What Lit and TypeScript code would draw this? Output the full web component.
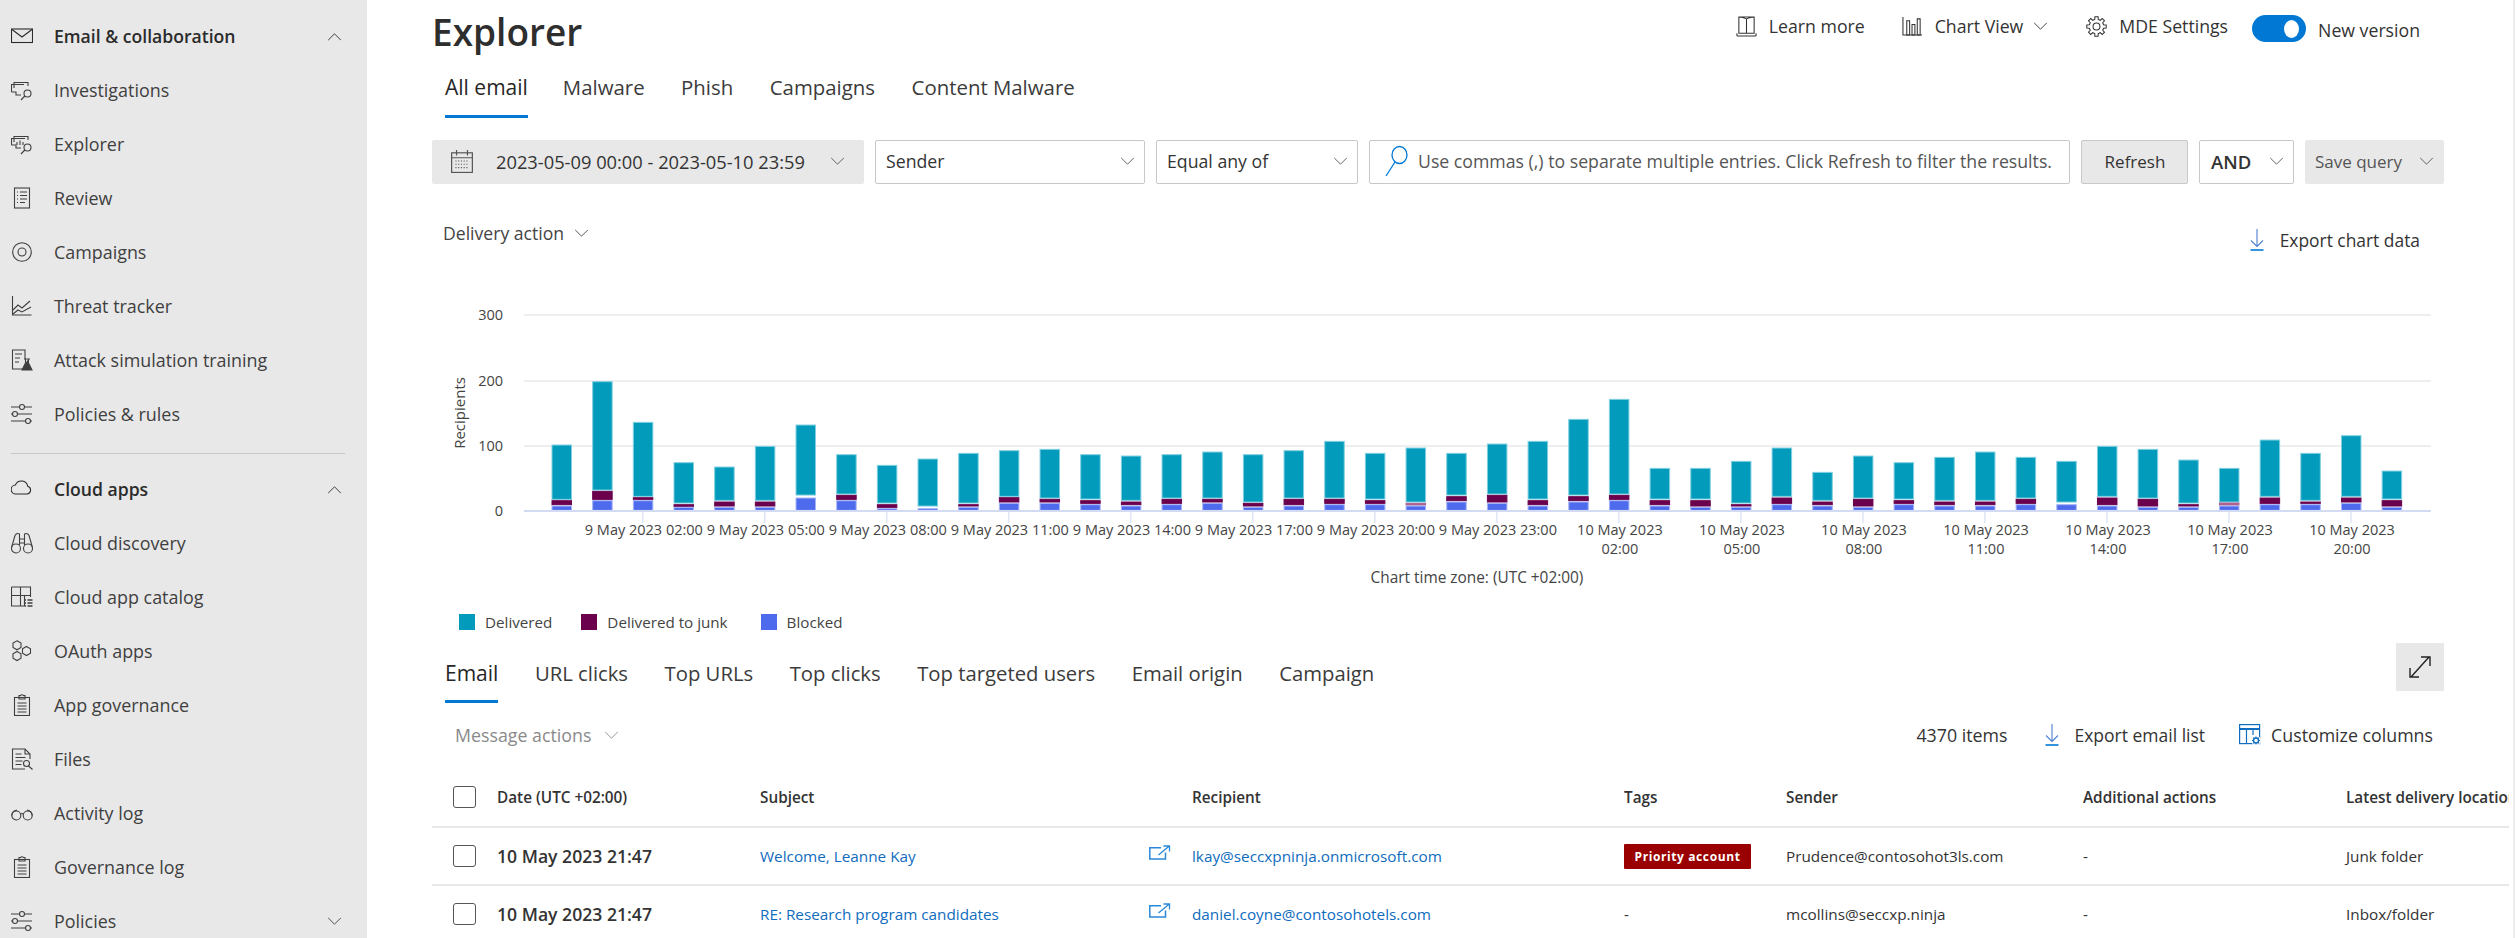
import { LitElement, html, css, svg } from "lit";
import { customElement } from "lit/decorators.js";

const s = (c: unknown, vb = "0 0 22 22", cls = "") => html`<svg class="ic ${cls}" viewBox=${vb} fill="none" stroke="currentColor" stroke-width="1.1">${c}</svg>`;

const gearPath = (() => {
  const pts: string[] = [];
  const n = 8;
  for (let i = 0; i < n; i++) {
    const a = (i / n) * Math.PI * 2;
    const st = Math.PI / n;
    const p = (r: number, t: number) => `${(11 + r * Math.cos(t)).toFixed(2)} ${(11 + r * Math.sin(t)).toFixed(2)}`;
    pts.push(`${i ? "L" : "M"}${p(10.3, a - st * 0.42)}`, `L${p(10.3, a + st * 0.42)}`, `L${p(7.6, a + st * 0.62)}`, `L${p(7.6, a + st * 1.38)}`);
  }
  return pts.join("") + "Z";
})();

const I: Record<string, unknown> = {
  mail: svg`<rect x="0.5" y="4" width="21" height="13.5"/><path d="M1 4.5l10 7.5 10-7.5"/>`,
  inv: svg`<path d="M3 9V3.5h14V7"/><path d="M0.5 13V5.5H13M0.5 13H5v3h5"/><circle cx="16.5" cy="14.5" r="3.5"/><path d="M13.8 17L10 21"/>`,
  exp: svg`<path d="M3 9V3.5h14V7"/><path d="M0.5 12V5.5H14M0.5 12H5v3h5"/><circle cx="16.5" cy="14.5" r="3.5"/><path d="M13.8 17L10 21M6 12V9M9 12V7.5M12 12V9"/>`,
  rev: svg`<rect x="3.5" y="1" width="15" height="20"/><path d="M6 5h1M6 8.5h1M6 12h1M6 15.5h1M9 5h7M9 8.5h7M9 12h7M9 15.5h5"/>`,
  cam: svg`<circle cx="11" cy="11" r="9.3"/><circle cx="11" cy="11" r="4"/>`,
  thr: svg`<path d="M1.5 1v19h19"/><path d="M2 15l5-5 4 3 8-7M2 19l5-4 4 2 9-5"/>`,
  atk: svg`<path d="M11 20H1.5V1H14v9"/><path d="M4 5h7M4 9h5M4 13h4M13 10h6M14.5 10v4"/><path d="M17.5 10v4l3.5 7h-10l3.5-7" fill="currentColor"/>`,
  pol: svg`<path d="M0 4h21M0 11h21M0 18h21"/><circle cx="11" cy="4" r="2.5" fill="#e8e8e8"/><circle cx="4" cy="11" r="2.5" fill="#e8e8e8"/><circle cx="17" cy="18" r="2.5" fill="#e8e8e8"/>`,
  cloud: svg`<path d="M5.5 18a4.5 4.5 0 0 1-.6-9 6.5 6.5 0 0 1 12.4 1.3A4 4 0 0 1 17 18z" transform="translate(-0.5 -2)"/>`,
  bin: svg`<circle cx="5" cy="16.5" r="4.5"/><circle cx="17" cy="16.5" r="4.5"/><path d="M0.7 15L4 3.5q1.5-3 4.5-1.5V13M21.3 15L18 3.5q-1.5-3-4.5-1.5V13M8.500 7h5M8.500 11h5"/>`,
  cat: svg`<path d="M0.500 1h19v10M0.500 1v19h13V9M0.500 9.500H19.500M9.500 1v19"/><path d="M14 14h1M14 17h1M14 20h1M16.500 14h5M16.500 17h5M16.500 20h5" stroke-width="1.3"/>`,
  oau: svg`<path d="M6 0.800l4 2.300v4.400l-4 2.300-4-2.300V3.100zM6 11.500l4 2.300v4.400l-4 2.300-4-2.300v-4.400zM15.500 6.500l4 2.300v4.400l-4 2.300-4-2.300V8.800z"/>`,
  clip: svg`<rect x="3.500" y="3.500" width="15" height="18"/><path d="M8 3.500V1.500h1.500q1.500-1.500 3 0H14v3.500H8zM6.500 9h9M6.500 12h9M6.500 15h9M6.500 18h9"/>`,
  file: svg`<path d="M14 21H1.500V1H14l5 5v5"/><path d="M14 1v5h5M4.500 6h6M4.500 9.500h10M4.500 13h7M4.500 16.500h6"/><circle cx="15.500" cy="15.500" r="3"/><path d="M17.500 18l4 3.500"/>`,
  glass: svg`<circle cx="5.300" cy="13.500" r="4.500"/><circle cx="16.700" cy="13.500" r="4.500"/><path d="M9.500 12q1.500-1 3 0M0.800 13.500Q1 9 6 8M21.200 13.500Q21 9 16 8"/>`,
  cal: svg`<rect x="1.500" y="3.500" width="19" height="18"/><path d="M1.500 8h19M6 1v5M16 1v5"/><path d="M5 11h12M5 14h12M5 17h12" stroke-dasharray="1 1.500"/>`,
  book: svg`<path d="M3 1h16v17H3zM11 3v15M3 1q4 0 8 2q4-2 8-2M1 21h20M1 18v3M21 18v3"/>`,
  chart: svg`<path d="M1 1v19h20"/><path d="M5 5h3v15H5zM10.500 9h3v11h-3zM16 3h3v17h-3z"/>`,
  gear: svg`<path d=${gearPath}/><circle cx="11" cy="11" r="3.600"/>`,
  dl: svg`<path d="M7 0v17.500M1 11.500l6 6 6-6" stroke="#4f7fd0"/><path d="M0.500 21h13" stroke="#0078d4" stroke-width="1.600"/>`,
  cust: svg`<rect x="0.600" y="0.600" width="20" height="19" stroke-width="1.200"/><path d="M1 5h20" stroke-width="2"/><path d="M7.500 6v14M14 6v5" stroke-width="1.200"/><circle cx="17" cy="16.500" r="4.800" fill="#fff" stroke="none"/><circle cx="17" cy="16.500" r="2.500" stroke-width="1.400"/><path d="M17 12.500v1.500M17 19v1.500M13 16.500h1.500M19.500 16.500H21M14.200 13.700l1 1M18.800 18.300l1 1M19.800 13.700l-1 1M15.200 18.300l-1 1" stroke-width="1.100"/>`,
  open: svg`<path d="M12 2.700H0.800V14H16.500V7.500" stroke-width="1.500"/><path d="M9.500 10L20 1.200M14.500 1H20.500V6.500" stroke-width="1.300"/>`,
};
const chev = (up = false) => html`<svg class="chev" viewBox="0 0 16 10" fill="none" stroke="currentColor" stroke-width="1"><path d=${up ? "M1 9l7-7 7 7" : "M1 1l7 7 7-7"}/></svg>`;

const nav1 = [["inv", "Investigations"], ["exp", "Explorer"], ["rev", "Review"], ["cam", "Campaigns"], ["thr", "Threat tracker"], ["atk", "Attack simulation training"], ["pol", "Policies & rules"]];
const nav2 = [["bin", "Cloud discovery"], ["cat", "Cloud app catalog"], ["oau", "OAuth apps"], ["clip", "App governance"], ["file", "Files"], ["glass", "Activity log"], ["clip", "Governance log"]];

// [teal top, teal bottom, junk top, junk bottom, blue top] zoomed px, baseline 662, 3 per real px
const bars: number[][] = [
  [465,628,632,644,648],[275,600,604,628,632],[397,619,623,628,632],[518,639,644,649,652],[531,631,636,648,652],[469,631,636,648,652],
  [405,615,0,0,624],[494,612,616,628,632],[526,639,644,652,656],[507,648,0,0,656],[490,639,644,648,652],[482,619,623,636,640],
  [478,624,628,636,640],[494,627,632,640,644],[498,631,636,644,648],[494,624,628,640,644],[486,624,628,636,640],[494,636,640,648,652],
  [482,624,628,644,648],[454,624,628,640,644],[490,627,632,640,644],[474,636,640,645,648],[490,615,620,632,636],[462,612,616,636,640],
  [454,627,632,644,648],[388,615,620,632,636],[328,612,616,628,632],[535,627,632,644,648],[535,627,632,648,652],[514,639,644,648,652],
  [474,619,624,640,644],[547,631,636,644,648],[498,624,628,648,652],[518,627,632,640,644],[502,631,636,644,648],[486,631,636,644,648],
  [502,624,628,640,644],[514,636,0,0,644],[469,619,624,644,648],[478,624,628,648,652],[510,639,644,648,652],[535,636,639,645,648],
  [450,619,624,640,644],[490,631,636,640,644],[437,619,624,636,640],[543,627,632,648,652],
];
const Y0 = 210.7, X0 = 122; // svg origin: page x 430, y 300
const y = (z: number) => (z - 662) / 3 + Y0;
const ticks = ["9 May 2023 02:00","9 May 2023 05:00","9 May 2023 08:00","9 May 2023 11:00","9 May 2023 14:00","9 May 2023 17:00","9 May 2023 20:00","9 May 2023 23:00",["10 May 2023","02:00"],["10 May 2023","05:00"],["10 May 2023","08:00"],["10 May 2023","11:00"],["10 May 2023","14:00"],["10 May 2023","17:00"],["10 May 2023","20:00"]];

@customElement("app-root")
export class AppRoot extends LitElement {
  static styles = css`
    :host { display: block; width: 2515px; height: 938px; overflow: hidden; background: #fff; font-family: "Open Sans", "Noto Sans", sans-serif; color: #333; }
    * { box-sizing: border-box; }
    .page { display: flex; height: 938px; }
    .ic { width: 22px; height: 22px; flex: none; display: block; }
    .ic.dlic { width: 14px; height: 22px; }
    .chev { width: 15px; height: 9px; flex: none; display: block; }
    .side { width: 367px; flex: none; background: #e8e8e8; padding-top: 9px; color: #3f3f3f; }
    .nav { height: 54px; display: flex; align-items: center; padding-left: 11px; font-size: 17.9px; }
    .nav .ic { margin-right: 21px; }
    .nav.head { font-weight: 600; font-size: 17.6px; color: #2b2b2b; }
    .nav .chev { margin-left: auto; margin-right: 25px; }
    .div { height: 1px; background: #c8c8c8; margin: 12px 22px 8px 11px; }
    .main { flex: 1; min-width: 0; padding-left: 65px; overflow: hidden; border-right: 2px solid #eeeeee; }
    .top { height: 64px; display: flex; justify-content: space-between; }
    h1 { margin: 9px 0 0; font-size: 37px; font-weight: 600; line-height: 46px; color: #2e2e2e; }
    .tr { display: flex; padding: 13px 93px 0 0; font-size: 17.7px; height: 46px; }
    .tr .a { display: flex; align-items: center; gap: 12px; height: 26px; }
    .tr .ic { width: 21px; height: 21px; }
    .tr .chev { margin-left: -2px; }
    .a1 { margin-right: 37px; } .a2 { margin-right: 38px; } .a3 { margin-right: 24px; }
    .toggle { width: 54px; height: 27px; border-radius: 14px; background: #0078d4; display: flex; align-items: center; justify-content: flex-end; padding-right: 7px; margin: 2px 12px 0 0; }
    .toggle i { width: 15px; height: 18px; border-radius: 50%; background: #fff; display: block; }
    .nv { line-height: 34px; }
    .tabs { display: flex; height: 54px; padding-left: 13px; font-size: 20.4px; color: #3b3b3b; }
    .tab { height: 54px; padding-top: 9px; line-height: 28px; border-bottom: 3px solid transparent; white-space: nowrap; }
    .tab.on { border-bottom-color: #0078d4; color: #262626; font-weight: 500; font-size: 21px; }
    .t1 .tab { margin-right: 36.5px; }
    .t1 .tab.on { margin-right: 35px; }
    .filters { display: flex; margin-top: 22px; height: 44px; gap: 11px; font-size: 17.7px; }
    .f { height: 44px; border: 1px solid #c8c8c8; border-radius: 2px; display: flex; align-items: center; padding: 0 9px 2px 10px; }
    .f .chev { margin-left: auto; color: #555; }
    .date { width: 432px; background: #e8e8e8; border: 0; padding: 0 19px 2px 18px; font-size: 18.300px; }
    .date .ic { margin-right: 22px; width: 24px; height: 24px; color: #555; }
    .sender { width: 270px; } .eq { width: 202px; }
    .search { width: 701px; padding-left: 15px; color: #555; white-space: nowrap; }
    .search svg { width: 23px; height: 32px; flex: none; margin-right: 10px; }
    .refresh { width: 107px; background: #e8e8e8; justify-content: center; font-size: 17px; }
    .and { width: 95px; font-weight: 600; padding-left: 11px; font-size: 18.5px; }
    .save { width: 139px; background: #e8e8e8; border: 0; padding: 0 10px 2px 10px; color: #555; font-size: 17px; }
    .bar2 { display: flex; justify-content: space-between; height: 88px; padding: 0 93px 0 11px; }
    .da { display: flex; align-items: center; gap: 10px; height: 26px; margin-top: 36px; font-size: 17.6px; color: #444; }
    .ec { display: flex; align-items: center; gap: 16px; height: 26px; margin-top: 43px; font-size: 17.4px; }
    .chart { display: block; margin-left: -2px; width: 2085px; height: 312px; margin-top: 28px; }
    .chart text { font-family: "Open Sans", sans-serif; fill: #444; font-size: 14.500px; }
    .legend { display: flex; padding-left: 27px; font-size: 15.200px; color: #444; height: 18px; align-items: center; margin-top: 1px; }
    .legend i { width: 16px; height: 16px; margin-right: 10px; display: block; }
    .lg1 { margin-right: 29px; } .lg2 { margin-right: 33px; }
    .t2row { display: flex; justify-content: space-between; padding-right: 69px; height: 84px; }
    .t2 { height: 72px; font-size: 20.300px; }
    .t2 .tab { height: 72px; padding-top: 28px; margin-right: 36.500px; }
    .exp { width: 48px; height: 48px; background: #e8e8e8; display: flex; align-items: center; justify-content: center; margin-top: 12px; }
    .exp svg { width: 26px; height: 26px; color: #222; }
    .acts { display: flex; align-items: center; height: 40px; padding: 0 80px 0 23px; font-size: 17.800px; }
    .ma { color: #8a8a8a; display: flex; gap: 13px; align-items: center; margin-right: auto; }
    .acts .act { display: flex; align-items: center; gap: 14px; }
    .acts .act.c { gap: 10px; }
    .acts .ael { gap: 15px; font-size: 17.500px; }
    .items { margin-right: 38px; } .ael { margin-right: 34px; }
    .acts .ic { color: #106ebe; }
    .tbl { display: grid; grid-template-columns: 65px 263px 432px 432px 162px 297px 263px 163px; width: 2077px; font-size: 15.300px; margin-top: 15px; white-space: nowrap; overflow: hidden; }
    .tbl > div { display: flex; align-items: center; border-bottom: 2px solid #e8e8e8; height: 58px; min-width: 0; }
    .tbl > div.h { font-weight: 600; font-size: 15.300px; color: #333; padding-bottom: 2px; }
    .cb { width: 23px; height: 22px; border: 1px solid #555; border-radius: 3px; margin-left: 21px; flex: none; }
    .tbl > .dt { font-weight: 600; font-size: 17.600px; }
    a { color: #0f6cbd; text-decoration: none; }
    .tbl > .rc { gap: 21px; margin-left: -43px; }
    .rc .ic { color: #2b88d8; }
    .badge { background: #9a0000; color: #fff; font-size: 12px; font-weight: 700; letter-spacing: .6px; height: 25px; width: 127px; display: flex; align-items: center; justify-content: center; border-radius: 1px; }
  `;

  private nav(icon: string, label: string, head = false, c: unknown = null) {
    return html`<div class="nav ${head ? "head" : ""}">${s(I[icon])}<span>${label}</span>${c}</div>`;
  }

  private chart() {
    return html`<svg class="chart" viewBox="0 0 2085 312">
      ${[15, 81, 146].map((v) => svg`<rect x="94" y=${v - 1} width="1907" height="2" fill="#eee"/>`)}
      ${[["300", 15], ["200", 81], ["100", 146], ["0", 211]].map(([t, v]) => svg`<text x="73" y=${(v as number) + 5} text-anchor="end">${t}</text>`)}
      <text transform="translate(35 113) rotate(-90)" text-anchor="middle" style="font-size:15px">Recipients</text>
      ${bars.map((b, i) => {
        const x = X0 + i * 40.67;
        const r = (top: number, bot: number, c: string, st: string) => svg`<rect x=${x} y=${y(top)} width="19.500" height=${Math.max(y(bot) - y(top), 0)} fill=${c} stroke=${st} stroke-width="1"/>`;
        const pale = b[3] - b[2] > 0 && i !== 21 && i !== 41;
        return svg`${r(b[0], b[1], "#029bbc", "#7fcfe0")}${b[2] ? r(b[2], b[3], pale ? "#6b004d" : "#b0608f", pale ? "#6b004d" : "#b0608f") : null}${r(b[4], 661, "#4f6bed", "#a5b4f5")}`;
      })}
      <rect x="94" y="210" width="1907" height="2" fill="#d3dbf2"/>
      ${ticks.map((t, i) => {
        const cx = X0 + (2 + i * 3) * 40.67 + 9.500;
        return svg`<rect x=${cx - 0.500} y="212" width="1" height="11" fill="#cfd8ee"/>
        ${Array.isArray(t)
          ? svg`<text x=${cx + 1} y="235" text-anchor="middle">${t[0]}</text><text x=${cx + 1} y="254" text-anchor="middle">${t[1]}</text>`
          : svg`<text x=${cx + 1} y="235" text-anchor="middle">${t}</text>`}`;
      })}
      <text x="1047" y="283" text-anchor="middle" style="font-size:15.400px">Chart time zone: (UTC +02:00)</text>
    </svg>`;
  }

  render() {
    return html`<div class="page">
      <div class="side">
        ${this.nav("mail", "Email & collaboration", true, chev(true))}
        ${nav1.map(([i, l]) => this.nav(i, l))}
        <div class="div"></div>
        ${this.nav("cloud", "Cloud apps", true, chev(true))}
        ${nav2.map(([i, l]) => this.nav(i, l))}
        ${this.nav("pol", "Policies", false, chev())}
      </div>
      <div class="main">
        <div class="top">
          <h1>Explorer</h1>
          <div class="tr">
            <div class="a a1">${s(I.book)}<span>Learn more</span></div>
            <div class="a a2">${s(I.chart)}<span>Chart View</span>${chev()}</div>
            <div class="a a3">${s(I.gear)}<span>MDE Settings</span></div>
            <div class="toggle"><i></i></div>
            <span class="nv">New version</span>
          </div>
        </div>
        <div class="tabs t1">
          ${["All email", "Malware", "Phish", "Campaigns", "Content Malware"].map((t, i) => html`<div class="tab ${i === 0 ? "on" : ""}">${t}</div>`)}
        </div>
        <div class="filters">
          <div class="f date">${s(I.cal)}<span>2023-05-09 00:00 - 2023-05-10 23:59</span>${chev()}</div>
          <div class="f sender"><span>Sender</span>${chev()}</div>
          <div class="f eq"><span>Equal any of</span>${chev()}</div>
          <div class="f search"><svg viewBox="0 0 23 32" fill="none" stroke="#0078d4" stroke-width="1.300"><ellipse cx="14.500" cy="10" rx="7.500" ry="8.500"/><path d="M10 17L1 31"/></svg><span>Use commas (,) to separate multiple entries. Click Refresh to filter the results.</span></div>
          <div class="f refresh">Refresh</div>
          <div class="f and"><span>AND</span>${chev()}</div>
          <div class="f save"><span>Save query</span>${chev()}</div>
        </div>
        <div class="bar2">
          <div class="da"><span>Delivery action</span>${chev()}</div>
          <div class="ec">${s(I.dl, "0 0 14 22", "dlic")}<span>Export chart data</span></div>
        </div>
        ${this.chart()}
        <div class="legend">
          <i style="background:#029bbc"></i><span class="lg1">Delivered</span>
          <i style="background:#6b004d"></i><span class="lg2">Delivered to junk</span>
          <i style="background:#4f6bed"></i><span>Blocked</span>
        </div>
        <div class="t2row">
          <div class="tabs t2">
            ${["Email", "URL clicks", "Top URLs", "Top clicks", "Top targeted users", "Email origin", "Campaign"].map((t, i) => html`<div class="tab ${i === 0 ? "on" : ""}">${t}</div>`)}
          </div>
          <div class="exp"><svg viewBox="0 0 26 26" fill="none" stroke="currentColor" stroke-width="1.400"><path d="M4 23L22 3M14 3h9v9M3 14v9h9"/></svg></div>
        </div>
        <div class="acts">
          <div class="ma"><span>Message actions</span>${chev()}</div>
          <span class="items">4370 items</span>
          <div class="act ael">${s(I.dl, "0 0 14 22", "dlic")}<span>Export email list</span></div>
          <div class="act c">${s(I.cust)}<span>Customize columns</span></div>
        </div>
        <div class="tbl">
          <div class="h"><span class="cb"></span></div>
          <div class="h">Date (UTC +02:00)</div><div class="h">Subject</div><div class="h">Recipient</div><div class="h">Tags</div><div class="h">Sender</div><div class="h">Additional actions</div><div class="h">Latest delivery location</div>
          <div><span class="cb"></span></div>
          <div class="dt">10 May 2023 21:47</div><div><a>Welcome, Leanne Kay</a></div>
          <div class="rc">${s(I.open)}<a>lkay@seccxpninja.onmicrosoft.com</a></div>
          <div><span class="badge">Priority account</span></div><div>Prudence@contosohot3ls.com</div><div>-</div><div>Junk folder</div>
          <div><span class="cb"></span></div>
          <div class="dt">10 May 2023 21:47</div><div><a>RE: Research program candidates</a></div>
          <div class="rc">${s(I.open)}<a>daniel.coyne@contosohotels.com</a></div>
          <div>-</div><div>mcollins@seccxp.ninja</div><div>-</div><div>Inbox/folder</div>
        </div>
      </div>
    </div>`;
  }
}
